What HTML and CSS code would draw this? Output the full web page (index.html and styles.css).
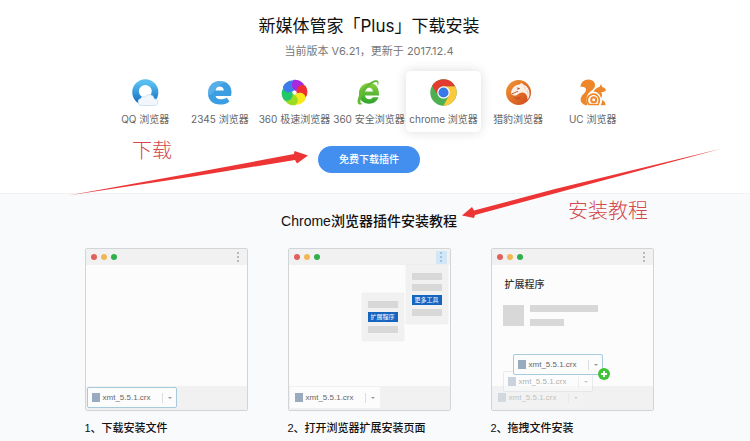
FILE: index.html
```html
<!DOCTYPE html>
<html lang="zh-CN">

<head>
    <meta charset="UTF-8">
    <meta name="viewport" content="width=device-width, initial-scale=1.0">
    <title>新媒体管家「Plus」下载安装</title>
    <link rel="stylesheet" href="styles.css">
</head>

<body>
    <header class="download">
        <h1>新媒体管家「Plus」下载安装</h1>
        <p class="version">当前版本 V6.21，更新于 2017.12.4</p>

        <nav class="browsers">
            <a href="#qq" class="browser">
                <svg class="logo" viewBox="0 0 27 27" aria-hidden="true">
                    <defs>
                        <linearGradient id="qqRing" x1="0" y1="0" x2="0" y2="1">
                            <stop offset="0" stop-color="#58bdf0" />
                            <stop offset="1" stop-color="#1673c4" />
                        </linearGradient>
                    </defs>
                    <circle cx="13.300" cy="13.300" r="9.300" fill="#fff" stroke="url(#qqRing)" stroke-width="7.500" />
                    <circle cx="13.300" cy="12.300" r="6.400" fill="#fff" />
                    <path d="M9.500 26.500a3.500 3.500 0 0 1-.8-6.900 3.200 3.200 0 0 1 4.300-1.600 5 5 0 0 1 9.200 1.800 3.400 3.400 0 0 1 1 6.700z" fill="#f1f7fc" stroke="#b9d4e8" stroke-width=".6" />
                </svg>
                <span>QQ 浏览器</span>
            </a>
            <a href="#2345" class="browser">
                <svg class="logo" viewBox="0 0 27 27" aria-hidden="true">
                    <path d="M25 17H9.500c.7 2.300 2.500 3.300 5 3.300 2.300 0 4-.5 6.300-1.600l2.700 3.700C20.800 24.600 17.600 25.500 14 25.500 6.700 25.500 2 21 2 14.200 2 7.200 6.800 2 13.800 2 21 2 25.500 6.700 25.500 13.500zM9.500 11.500H18c-.5-2.700-2-4-4.300-4s-3.700 1.500-4.200 4z" fill="#3b9de2" fill-rule="evenodd" />
                    <path d="M2 16C9 17 8 6 20 3.500 18 2.400 16 2 13.800 2 6.800 2 2 7.200 2 14.200z" fill="#8ad0f6" opacity=".35" />
                </svg>
                <span>2345 浏览器</span>
            </a>
            <a href="#360-speed" class="browser">
                <svg class="logo" viewBox="-13.500 -13.500 27 27" aria-hidden="true">
                    <defs>
                        <path id="petal" d="M0-2C-4.500-4-6-9-2.500-12.500 2-14 8-11.500 9-7.500 6-8.500 2.500-6.500 1.700-1z" />
                    </defs>
                    <g transform="rotate(8)">
                        <use href="#petal" fill="#a629e0" />
                        <use href="#petal" fill="#ee2f34" transform="rotate(60)" />
                        <use href="#petal" fill="#f9e81c" transform="rotate(120)" />
                        <use href="#petal" fill="#9bdc22" transform="rotate(180)" />
                        <use href="#petal" fill="#22c768" transform="rotate(235)" />
                        <use href="#petal" fill="#3b7bea" transform="rotate(298)" />
                    </g>
                    <circle r="2" fill="#fff" />
                </svg>
                <span>360 极速浏览器</span>
            </a>
            <a href="#360-safe" class="browser">
                <svg class="logo" viewBox="0 0 27 27" aria-hidden="true">
                    <defs>
                        <linearGradient id="safeGreen" x1="0" y1="0" x2="0" y2="1">
                            <stop offset="0" stop-color="#8bd03e" />
                            <stop offset="1" stop-color="#2fa32f" />
                        </linearGradient>
                    </defs>
                    <path d="M24 16.500H10c.5 2.600 2 3.800 4.300 3.800 1.700 0 2.800-.7 3.500-2h5.700C22 22.500 18.800 24.700 14.200 24.700 8 24.700 4 20.700 4 14.500S8.200 4 14.200 4C20.700 4 24.300 8.500 24 16.500zM10 12.500h8c-.4-2.500-1.700-3.800-4-3.800-2.200 0-3.500 1.300-4 3.800z" fill="url(#safeGreen)" fill-rule="evenodd" />
                    <path d="M22.500 7C25 2.500 23 .2 19 1.500 12 4 5 12 3 19.500c-1.200 5 .5 7.500 5.500 5.300-3 .2-3.700-1.500-2.500-5C8 13.500 14 6.500 19 3.600c2.800-1.500 4.200-.6 3.500 3.400z" fill="#62b936" />
                </svg>
                <span>360 安全浏览器</span>
            </a>
            <a href="#chrome" class="browser selected">
                <svg class="logo" viewBox="0 0 48 48" aria-hidden="true">
                    <circle cx="24" cy="24" r="23.500" fill="#4caf50" />
                    <path d="M24 13h20.700A23.500 23.500 0 0 1 24 47.500L33.500 29.500z" fill="#fdc83c" />
                    <path d="M3.700 12.200A23.500 23.500 0 0 1 44.700 13H24A11 11 0 0 0 14.500 29.500z" fill="#e23c30" />
                    <circle cx="24" cy="24" r="11" fill="#fff" />
                    <circle cx="24" cy="24" r="9" fill="#3b78e7" />
                </svg>
                <span>chrome 浏览器</span>
            </a>
            <a href="#liebao" class="browser">
                <svg class="logo" viewBox="0 0 27 27" aria-hidden="true">
                    <defs>
                        <linearGradient id="leopard" x1="0" y1="0" x2="1" y2="1">
                            <stop offset="0" stop-color="#f39a35" />
                            <stop offset="1" stop-color="#cf451b" />
                        </linearGradient>
                    </defs>
                    <circle cx="13.500" cy="13.500" r="12.500" fill="url(#leopard)" />
                    <path d="M6 14C6.500 9 10 6 14.500 5.500c1-1.700 3-1.500 3.700 0C22.500 7 25 11 24.500 16c-.3 2-1 3.500-2 4.500 0-4-1.500-6.500-4.500-7-2.500-.3-4 1-6 2.500-1.800 1.200-5 .5-6-2z" fill="#fbeee4" />
                    <path d="M7 14.500c2 .5 3.500-2 6-2M12 9l2.500.5-2 1" fill="none" stroke="#a84c25" stroke-width=".9" />
                    <path d="M19 7.500l2 3M22 11l1 4" stroke="#e7c5ad" stroke-width=".7" />
                    <path d="M8 17c3 2 5 2 8 0-1 4-5 5-8 0z" fill="#b93a18" opacity=".5" />
                </svg>
                <span>猎豹浏览器</span>
            </a>
            <a href="#uc" class="browser">
                <svg class="logo" viewBox="0 0 27 27" aria-hidden="true">
                    <g fill="#ee8729">
                        <path d="M7 26.300C2.500 25 .2 21.500 2.500 17.500 4 15 7 13.500 7 10.500 7 8.500 4.500 7.500 1.500 8 1.500 3.500 5 .5 9.500.5c5 0 7.500 3.800 6.200 7.500-1 3-5.500 4.500-7.200 8C7.300 19 7.200 22 8.500 26.300z" />
                        <path d="M14.500 12.500c1.500-2.500 3.500-4 6-4.500l1.500-3 1.200 3c2 .5 3.500 1.700 3.800 3.300-1 1.500-2.700 1.900-4.700 1.700.9 2.300 1 4.300-.3 6.200-.7-3.700-3.200-6.200-7.500-6.700z" />
                        <path d="M21.500 26.300c1.200-1.800 1.700-3.500 1.500-5.300 2.300.8 3.500 2.500 3.500 5.300z" />
                    </g>
                    <path d="M10 25.300A6 6 0 1 1 19.300 24.500M9.500 25.500H20" fill="none" stroke="#ee8729" stroke-width="1.700" />
                    <circle cx="14.700" cy="20.700" r="2.500" fill="none" stroke="#ee8729" stroke-width="2" />
                </svg>
                <span>UC 浏览器</span>
            </a>
        </nav>

        <button type="button" class="download-button">免费下载插件</button>
    </header>

    <main class="tutorial">
        <h2>Chrome浏览器插件安装教程</h2>

        <div class="steps">
            <figure class="step">
                <div class="window">
                    <div class="title-bar">
                        <i class="dot red"></i><i class="dot yellow"></i><i class="dot green"></i>
                        <span class="more"><i></i><i></i><i></i></span>
                    </div>
                    <div class="page"></div>
                    <div class="shelf">
                        <div class="file active"><i class="file-icon"></i><span>xmt_5.5.1.crx</span><i class="arrow"></i></div>
                    </div>
                </div>
                <figcaption>1、下载安装文件</figcaption>
            </figure>

            <figure class="step">
                <div class="window">
                    <div class="title-bar">
                        <i class="dot red"></i><i class="dot yellow"></i><i class="dot green"></i>
                        <span class="more open"><i></i><i></i><i></i></span>
                    </div>
                    <div class="page">
                        <div class="menu sub-menu"><i></i><b>扩展程序</b><i></i></div>
                        <div class="menu main-menu"><i></i><i></i><b>更多工具</b><i></i></div>
                    </div>
                    <div class="shelf">
                        <div class="file"><i class="file-icon"></i><span>xmt_5.5.1.crx</span><i class="arrow"></i></div>
                    </div>
                </div>
                <figcaption>2、打开浏览器扩展安装页面</figcaption>
            </figure>

            <figure class="step">
                <div class="window">
                    <div class="title-bar">
                        <i class="dot red"></i><i class="dot yellow"></i><i class="dot green"></i>
                        <span class="more"><i></i><i></i><i></i></span>
                    </div>
                    <div class="page extensions">
                        <h3>扩展程序</h3>
                        <div class="extension">
                            <i class="thumb"></i>
                            <div class="lines"><i></i><i class="short"></i></div>
                        </div>
                    </div>
                    <div class="shelf">
                        <div class="file trail-start"><i class="file-icon"></i><span>xmt_5.5.1.crx</span><i class="arrow"></i></div>
                    </div>
                    <div class="file dragged trail-middle"><i class="file-icon"></i><span>xmt_5.5.1.crx</span><i class="arrow"></i></div>
                    <div class="file dragged active">
                        <i class="file-icon"></i><span>xmt_5.5.1.crx</span><i class="arrow"></i>
                        <svg class="plus" viewBox="0 0 12 12" aria-hidden="true">
                            <circle cx="6" cy="6" r="6" fill="#3fc435" />
                            <path d="M6 3v6M3 6h6" stroke="#fff" stroke-width="2" />
                        </svg>
                    </div>
                </div>
                <figcaption>2、拖拽文件安装</figcaption>
            </figure>
        </div>
    </main>

    <!-- Hand-drawn notes over the page -->
    <div class="notes">
        <svg class="note-arrows" viewBox="0 0 750 230" aria-hidden="true">
            <path d="M68 195.500L190 173.500L294 154L294.500 151L308 155.500L297 163.500L295 160L190 177z" fill="#ee3536" />
            <path d="M722 148.500L560 192L475 215L474 218L462 215.500L472 207L474 210.500L555 189z" fill="#ee3536" />
        </svg>
        <span class="note note-download">下载</span>
        <span class="note note-tutorial">安装教程</span>
    </div>
</body>

</html>
```

FILE: styles.css
```css
* {
    box-sizing: border-box;
}

body {
    position: relative;
    margin: 0;
    font-family: "Liberation Sans", "Noto Sans CJK SC", sans-serif;
    background-color: #f9fafc;
    color: #111;
}

h1,
h2,
h3,
p,
figure {
    margin: 0;
    font-weight: normal;
}

.download {
    display: flex;
    flex-direction: column;
    align-items: center;
    padding: 14px 12px 20px 0;
    background-color: #fff;
    border-bottom: 1px solid #f1f2f4;
    font-family: Inter, "Noto Sans CJK SC", sans-serif;
}

h1 {
    font-size: 17px;
    line-height: 24px;
}

.version {
    margin-top: 5px;
    font-size: 11px;
    line-height: 16px;
    color: #777;
}

.browsers {
    display: grid;
    grid-template-columns: repeat(7, 1fr);
    width: 522px;
    max-width: 100%;
    margin-top: 12px;
}

.browser {
    display: flex;
    flex-direction: column;
    align-items: center;
    gap: 5px;
    padding: 8px 0 5px;
    border-radius: 5px;
    font-size: 10px;
    line-height: 16px;
    white-space: nowrap;
    color: #666;
    text-decoration: none;
}

.browser.selected {
    box-shadow: 0 0 12px rgba(0, 0, 0, 0.14);
}

.logo {
    width: 27px;
    height: 27px;
}

.download-button {
    margin-top: 14px;
    padding: 0 21px;
    border: none;
    border-radius: 14px;
    background-color: #428ff0;
    color: #fff;
    font-family: inherit;
    font-size: 10px;
    font-weight: 500;
    line-height: 27px;
    cursor: pointer;
}

.tutorial {
    padding: 17px 12px 6px 0;
}

h2 {
    font-size: 14px;
    font-weight: 500;
    line-height: 20px;
    text-align: center;
}

.steps {
    display: flex;
    justify-content: center;
    gap: 40px;
    margin-top: 17px;
}

.step {
    flex: 0 0 163px;
}

figcaption {
    margin-top: 9px;
    font-size: 11px;
    font-weight: 500;
    line-height: 16px;
    white-space: nowrap;
}

/* Browser window drawing */
.window {
    position: relative;
    border: 1px solid #d2d5d8;
    border-radius: 2px;
    background-color: #fcfcfc;
}

.title-bar {
    display: flex;
    align-items: center;
    gap: 4px;
    height: 16px;
    padding: 0 3px 0 5px;
    background-color: #f1f1f1;
}

.dot {
    width: 6px;
    height: 6px;
    border-radius: 50%;
}

.red {
    background-color: #e0605b;
}

.yellow {
    background-color: #f2b755;
}

.green {
    background-color: #2fb04c;
}

.more {
    display: flex;
    flex-direction: column;
    align-items: center;
    justify-content: center;
    gap: 2px;
    width: 11px;
    height: 13px;
    margin-left: auto;
}

.more i {
    width: 2px;
    height: 2px;
    background-color: #b9b9b9;
}

.more.open {
    background-color: #d3e6f5;
}

.more.open i {
    background-color: #9fc3dd;
}

.page {
    position: relative;
    height: 121px;
}

.shelf {
    height: 24px;
    padding: 1px;
    background-color: #f1f1f1;
}

.file {
    display: flex;
    align-items: center;
    width: 90px;
    height: 21px;
    padding: 0 4px;
    border: 1px solid transparent;
    border-radius: 2px;
    background-color: #fcfcfc;
    color: #666;
    font-size: 8px;
    line-height: 12px;
}

.file.active {
    border-color: #a5cbdc;
}

.file-icon {
    width: 8px;
    height: 9px;
    margin-right: 3px;
    background-color: #9aabbf;
}

.arrow {
    display: flex;
    align-items: center;
    height: 10px;
    margin-left: auto;
    padding-left: 5px;
    border-left: 1px solid #ddd;
}

.arrow::after {
    content: "";
    border: 2px solid transparent;
    border-top-color: #999;
    border-bottom: none;
}

.menu {
    position: absolute;
    display: flex;
    flex-direction: column;
    gap: 4px;
    width: 42px;
    padding: 8px 6px;
    border-radius: 2px;
    background-color: #f1f1f1;
    box-shadow: 0 0 1px #ccc;
}

.menu i {
    height: 7px;
    background-color: #d8d8d8;
}

.menu b {
    background-color: #1565c0;
    color: #fff;
    font-size: 6px;
    font-weight: normal;
    line-height: 10px;
    text-align: center;
    white-space: nowrap;
}

.main-menu {
    top: 0;
    right: 2px;
}

.sub-menu {
    top: 28px;
    right: 46px;
}

.extensions {
    padding: 12px 11px;
}

h3 {
    padding-left: 2px;
    font-size: 10px;
    font-weight: 500;
    line-height: 16px;
    color: #333;
}

.extension {
    display: flex;
    gap: 6px;
    margin-top: 12px;
}

.thumb {
    width: 21px;
    height: 21px;
    background-color: #d8d8d8;
}

.lines {
    display: flex;
    flex-direction: column;
    justify-content: space-between;
    width: 68px;
}

.lines i {
    height: 7px;
    background-color: #d8d8d8;
}

.lines .short {
    width: 50%;
}

.trail-start {
    background-color: #f5f5f5;
    opacity: 0.35;
}

.dragged {
    position: absolute;
    top: 105px;
    left: 21px;
}

.trail-middle {
    top: 122px;
    left: 11px;
    border-color: #d5dde2;
    opacity: 0.5;
}

.plus {
    position: absolute;
    right: -8px;
    bottom: -6px;
    width: 12px;
    height: 12px;
}

/* Notes */
.notes {
    position: absolute;
    top: 0;
    left: 0;
    width: 100%;
    pointer-events: none;
}

.note-arrows {
    display: block;
    width: 100%;
}

.note {
    position: absolute;
    font-size: 20px;
    font-weight: 300;
    line-height: 28px;
    white-space: nowrap;
    color: #d4474a;
}

.note-download {
    top: 137px;
    left: 132px;
}

.note-tutorial {
    top: 197px;
    left: 568px;
}
```
